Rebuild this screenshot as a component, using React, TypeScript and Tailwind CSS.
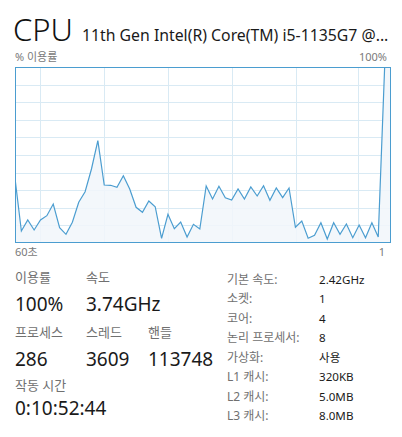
import React from "react";

const ys = [
  111.3, 164, 153, 163, 153, 148.7, 137, 160.7, 167.3, 155.3, 135.3, 124.7, 102, 73.7, 118, 118.3, 120.3, 108.7, 122,
  140.3, 145.3, 134, 139.7, 171.3, 147.3, 161.7, 155, 170, 157.3, 162, 119, 132, 119.3, 130.7, 133, 122, 132, 120,
  129, 118.7, 133.3, 121, 130.7, 121, 160.3, 154, 171.3, 168.3, 155.7, 172, 155.7, 167.3, 157, 170.7, 158, 170.7,
  155.7, 170, 0.5, 0.5,
];

const W = 376;
const H = 176;

function Graph() {
  const step = W / (ys.length - 1);
  const pts = ys.map((y, i) => `${(i * step).toFixed(2)},${y.toFixed(2)}`);
  const line = "M" + pts.join(" L");
  const area = `${line} L${W},${H} L0,${H} Z`;
  const vx = [25, 89, 153, 217, 281, 343];
  const hy = [1, 2, 3, 4, 5, 6, 7, 8, 9].map((k) => Math.round(k * 17.6) + 0.5);
  return (
    <svg width={W} height={H} viewBox={`0 0 ${W} ${H}`} className="block">
      <rect x={0} y={0} width={W} height={H} fill="#ffffff" />
      {vx.map((x) => (
        <line key={"v" + x} x1={x + 0.5} y1={0} x2={x + 0.5} y2={H} stroke="#d9eaf4" strokeWidth={1} />
      ))}
      {hy.map((y) => (
        <line key={"h" + y} x1={0} y1={y} x2={W} y2={y} stroke="#d9eaf4" strokeWidth={1} />
      ))}
      <path d={area} fill="#f1f6fa" fillOpacity={0.85} />
      <path d={line} fill="none" stroke="#4b9dd0" strokeWidth={1.2} strokeLinejoin="miter" />
      <rect x={0.5} y={0.5} width={W - 1} height={H - 1} fill="none" stroke="#4b9dd0" strokeWidth={1} />
    </svg>
  );
}

const font = { fontFamily: '"Noto Sans", "Noto Sans CJK KR", sans-serif' };

function Label({ children }: { children: React.ReactNode }) {
  return <div className="h-[16px] text-[13px] leading-[16px] text-[#707070] whitespace-nowrap">{children}</div>;
}
function Value({ children }: { children: React.ReactNode }) {
  return <div className="h-[24px] text-[19px] leading-[24px] text-[#1a1a1a] whitespace-nowrap">{children}</div>;
}

function Stat({ label, value, w, gap = "h-[7px]" }: { label: string; value: string; w?: string; gap?: string }) {
  return (
    <div className={w}>
      <Label>{label}</Label>
      <div className={gap} />
      <Value>{value}</Value>
    </div>
  );
}

export default function App() {
  const right: [string, string][] = [
    ["기본 속도:", "2.42GHz"],
    ["소켓:", "1"],
    ["코어:", "4"],
    ["논리 프로세서:", "8"],
    ["가상화:", "사용"],
    ["L1 캐시:", "320KB"],
    ["L2 캐시:", "5.0MB"],
    ["L3 캐시:", "8.0MB"],
  ];
  return (
    <div className="w-[402px] h-[437px] bg-white overflow-hidden px-[15px]" style={font}>
      <div className="flex items-baseline pt-[11px] h-[47px] whitespace-nowrap">
        <span className="text-[31px] leading-[36px] font-light text-[#111] -ml-[2px]">CPU</span>
        <span className="text-[15.8px] ml-[9px] text-[#1a1a1a]">11th Gen Intel(R) Core(TM) i5-1135G7 @...</span>
      </div>
      <div className="flex justify-between text-[11px] leading-[14px] text-[#7a7a7a] h-[20px] pt-[3px]">
        <span>% 이용률</span>
        <span>100%</span>
      </div>
      <Graph />
      <div className="flex justify-between h-[16px] text-[11px] leading-[14px] text-[#7a7a7a] pt-[2px]">
        <span>60초</span>
        <span className="pr-[2px]">1</span>
      </div>
      <div className="flex mt-[10px]">
        <div className="w-[212px]">
          <div className="flex">
            <Stat w="w-[71px]" label="이용률" value="100%" />
            <Stat label="속도" value="3.74GHz" />
          </div>
          <div className="flex mt-[8px]">
            <Stat w="w-[62px]" label="프로세스" value="286" />
            <div className="w-[9px]" />
            <Stat w="w-[62px]" label="스레드" value="3609" />
            <Stat label="핸들" value="113748" />
          </div>
          <div className="mt-[6px]">
            <Stat label="작동 시간" value="0:10:52:44" gap="h-[3px]" />
          </div>
        </div>
        <div className="grid grid-cols-[92px_1fr] auto-rows-[19.43px] text-[12px] leading-[19px] mt-[1px]">
          {right.map(([k, v]) => (
            <React.Fragment key={k}>
              <div className="h-[19.43px] text-[#707070] whitespace-nowrap">{k}</div>
              <div className="h-[19.43px] text-[#1a1a1a] whitespace-nowrap text-[11.6px]">{v}</div>
            </React.Fragment>
          ))}
        </div>
      </div>
    </div>
  );
}
